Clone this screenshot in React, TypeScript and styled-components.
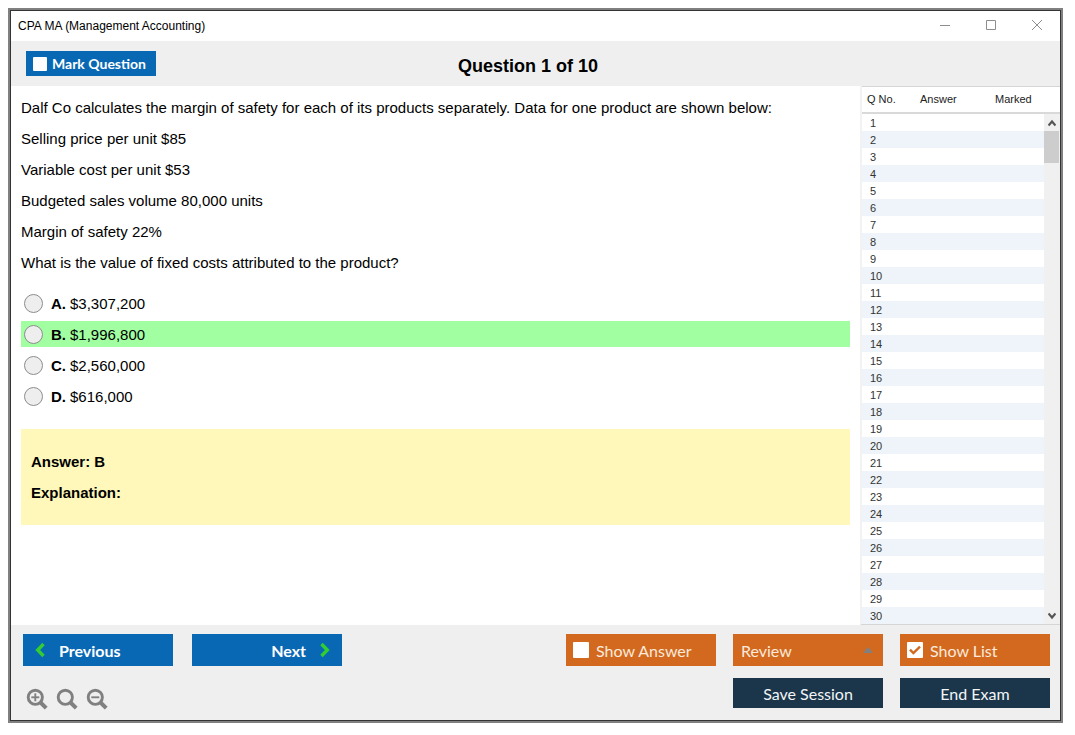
import React, { useState } from "react";
import styled, { createGlobalStyle } from "styled-components";

const GlobalStyle = createGlobalStyle`
  * { box-sizing: border-box; }
  body {
    margin: 0;
    background: #fff;
    color: #000;
    font-family: "Liberation Sans", Arial, sans-serif;
    font-size: 15px;
  }
  button { font: inherit; cursor: pointer; }
`;

const Page = styled.div`
  height: 100vh;
  min-height: 480px;
  padding: 8px 12px 12px 8px;
`;

const Frame = styled.div`
  height: 100%;
  border: 2px solid #808080;
`;

const Window = styled.div`
  height: 100%;
  display: flex;
  flex-direction: column;
  border: 1px solid #333436;
  background: #fff;
`;

const TitleBar = styled.header`
  flex: none;
  display: flex;
  align-items: center;
  justify-content: space-between;
  height: 30px;
  padding-left: 7px;
  font-size: 12px;
`;

const WindowControls = styled.div`
  display: flex;
`;

const WindowButton = styled.button`
  display: grid;
  place-items: center;
  width: 46px;
  height: 28px;
  padding: 0;
  border: 0;
  background: transparent;
  color: #8e8e8e;
`;

const Toolbar = styled.div`
  flex: none;
  display: grid;
  grid-template-columns: 1fr auto 1fr;
  align-items: center;
  height: 45px;
  padding: 0 30px 0 15px;
  background: #efefef;
`;

const Heading = styled.h1`
  margin: 0;
  padding-top: 4px;
  font-size: 18px;
  line-height: 20px;
`;

const CheckButton = styled.label<{ $tone: "blue" | "orange"; $small?: boolean }>`
  display: flex;
  align-items: center;
  justify-self: start;
  gap: ${(p) => (p.$small ? 5 : 7)}px;
  width: ${(p) => (p.$small ? 130 : 150)}px;
  height: ${(p) => (p.$small ? 25 : 32)}px;
  padding-left: 7px;
  background: ${(p) => (p.$tone === "blue" ? "#0968b4" : "#d2691e")};
  color: ${(p) => (p.$tone === "blue" ? "#fff" : "#fbe9dc")};
  font-family: Lato, sans-serif;
  font-size: ${(p) => (p.$small ? 14 : 16)}px;
  font-weight: ${(p) => (p.$small ? 700 : 400)};
  white-space: nowrap;
  cursor: pointer;
`;

const CheckFrame = styled.span<{ $small?: boolean }>`
  display: grid;
  width: ${(p) => (p.$small ? 14 : 16)}px;
  height: ${(p) => (p.$small ? 14 : 16)}px;
  color: #d2691e;
  > * { grid-area: 1 / 1; }
`;

const CheckInput = styled.input`
  appearance: none;
  width: 100%;
  height: 100%;
  margin: 0;
  border-radius: 1px;
  background: #fff;
`;

const Tick = styled.svg`
  width: 100%;
  height: 100%;
  z-index: 1;
  pointer-events: none;
`;

const Body = styled.div`
  flex: 1;
  min-height: 0;
  display: flex;
`;

const Question = styled.main`
  flex: 1;
  min-width: 0;
  overflow: hidden;
  padding: 13px 10px 0;
`;

const Paragraph = styled.p`
  margin: 0 0 14px;
  line-height: 17px;
`;

const Options = styled.fieldset`
  display: flex;
  flex-direction: column;
  gap: 5px;
  margin: 19px 0 20px;
  padding: 0;
  border: 0;
`;

const Option = styled.label<{ $correct: boolean }>`
  display: flex;
  align-items: center;
  height: 26px;
  padding-left: 3px;
  background: ${(p) => (p.$correct ? "#a1ffa1" : "transparent")};
`;

const OptionRadio = styled.input`
  appearance: none;
  width: 19px;
  height: 19px;
  margin: 0 8px 0 0;
  border: 1px solid #8c8c8c;
  border-radius: 50%;
  background: #eee;
  &:checked { background: radial-gradient(#444 0 5px, #eee 6px); }
`;

const OptionLetter = styled.b`
  margin-right: 4px;
`;

const AnswerBox = styled.section`
  display: flex;
  flex-direction: column;
  gap: 14px;
  padding: 24px 10px;
  background: #fff8ba;
  font-weight: 700;
  line-height: 17px;
`;

const ListPanel = styled.aside`
  flex: none;
  display: flex;
  flex-direction: column;
  width: 200px;
  border-left: 2px solid #f2f2f2;
  border-bottom: 1px solid #d5d5d5;
  font-size: 11px;
`;

const ListArea = styled.div`
  flex: 1;
  min-height: 0;
  display: grid;
  grid-template-columns: 1fr;
  grid-template-rows: minmax(0, 1fr);
  border-top: 1px solid #d5d5d5;
`;

const ListScroll = styled.div`
  grid-area: 1 / 1;
  min-height: 0;
  overflow: hidden;
`;

const ListTable = styled.table`
  width: 100%;
  border-collapse: separate;
  border-spacing: 0;
  table-layout: fixed;
  color: #333;
`;

const HeadCell = styled.th<{ $width?: number }>`
  width: ${(p) => (p.$width ? `${p.$width}px` : "auto")};
  height: 27px;
  padding: 0 0 2px 5px;
  border-bottom: 2px solid #d9d9d9;
  font-weight: 400;
  text-align: left;
  color: #222;
`;

const ListRow = styled.tr`
  &:nth-child(even) { background: #eef4f9; }
`;

const ListCell = styled.td`
  height: 17px;
  padding: 2px 0 0 8px;
  line-height: 15px;
`;

const ScrollTrack = styled.div`
  grid-area: 1 / 1;
  justify-self: end;
  display: flex;
  flex-direction: column;
  z-index: 1;
  width: 16px;
  margin-top: 27px;
  background: #f0f0f0;
`;

const ScrollButton = styled.button`
  display: grid;
  place-items: center;
  height: 17px;
  padding: 0;
  border: 0;
  background: transparent;
  color: #555;
`;

const ScrollThumb = styled.div`
  height: 32px;
  margin: 0 1px 0 0;
  background: #cdcdcd;
`;

const ScrollSpace = styled.div`
  flex: 1;
`;

const Footer = styled.footer`
  flex: none;
  display: flex;
  flex-direction: column;
  gap: 12px;
  padding: 9px 10px 10px 12px;
  background: #efefef;
`;

const FooterRow = styled.div`
  display: flex;
  justify-content: space-between;
`;

const ButtonGroup = styled.div<{ $gap: number }>`
  display: flex;
  gap: ${(p) => p.$gap}px;
`;

const NavButton = styled.button<{ $end?: boolean }>`
  display: flex;
  align-items: center;
  justify-content: ${(p) => (p.$end ? "flex-end" : "flex-start")};
  gap: 14px;
  width: 150px;
  height: 32px;
  padding: 0 12px;
  border: 0;
  background: #0968b4;
  color: #fff;
  font-family: Lato, sans-serif;
  font-size: 16px;
  font-weight: 700;
`;

const ReviewButton = styled.button`
  display: flex;
  align-items: center;
  justify-content: space-between;
  width: 150px;
  height: 32px;
  padding: 0 10px 0 8px;
  border: 0;
  background: #d2691e;
  color: #fbe9dc;
  font-family: Lato, sans-serif;
  font-size: 16px;
`;

const DarkButton = styled.button`
  width: 150px;
  height: 30px;
  padding: 0;
  border: 0;
  background: #1b364b;
  color: #f2f5f7;
  font-family: Lato, sans-serif;
  font-size: 16px;
`;

const ZoomTools = styled.div`
  display: flex;
  gap: 8px;
  padding: 10px 0 0 3px;
`;

const ZoomButton = styled.button`
  display: block;
  width: 22px;
  height: 22px;
  padding: 0;
  border: 0;
  background: transparent;
  color: #808080;
`;

const statement = [
  "Dalf Co calculates the margin of safety for each of its products separately. Data for one product are shown below:",
  "Selling price per unit $85",
  "Variable cost per unit $53",
  "Budgeted sales volume 80,000 units",
  "Margin of safety 22%",
  "What is the value of fixed costs attributed to the product?",
];

const options = [
  { letter: "A", text: "$3,307,200" },
  { letter: "B", text: "$1,996,800" },
  { letter: "C", text: "$2,560,000" },
  { letter: "D", text: "$616,000" },
];

const questionNumbers = Array.from({ length: 30 }, (_, i) => i + 1);

function ToggleButton(props: {
  label: string;
  tone: "blue" | "orange";
  small?: boolean;
  initial?: boolean;
}) {
  const [on, setOn] = useState(!!props.initial);
  return (
    <CheckButton $tone={props.tone} $small={props.small}>
      <CheckFrame $small={props.small}>
        <CheckInput type="checkbox" checked={on} onChange={() => setOn(!on)} />
        {on && (
          <Tick viewBox="0 0 16 16" fill="none" stroke="currentColor" strokeWidth="2.4">
            <path d="M3 7.6 6.4 11 13 4.6" />
          </Tick>
        )}
      </CheckFrame>
      {props.label}
    </CheckButton>
  );
}

function Chevron({ next }: { next?: boolean }) {
  return (
    <svg width="10" height="16" viewBox="0 0 10 16" fill="none" stroke="#32cd32" strokeWidth="3.4">
      <path d={next ? "M1.5 2 7.3 8 1.5 14" : "M8.5 2 2.7 8 8.5 14"} />
    </svg>
  );
}

function Magnifier({ sign }: { sign?: "plus" | "minus" }) {
  return (
    <svg width="22" height="22" viewBox="0 0 22 22" fill="none" stroke="currentColor">
      <circle cx="9.3" cy="9.3" r="7.1" strokeWidth="2.9" />
      <path d="M14 14 20.2 20.2" strokeWidth="4" />
      {sign && <path d="M5.3 9.3H13.3" strokeWidth="1.9" />}
      {sign === "plus" && <path d="M9.3 5.3V13.3" strokeWidth="1.9" />}
    </svg>
  );
}

export default function App() {
  const [chosen, setChosen] = useState("");
  return (
    <Page>
      <GlobalStyle />
      <Frame>
        <Window>
          <TitleBar>
            <span>CPA MA (Management Accounting)</span>
            <WindowControls>
              <WindowButton aria-label="Minimize">
                <svg width="12" height="12" fill="none" stroke="currentColor">
                  <path d="M1 5.5H11" />
                </svg>
              </WindowButton>
              <WindowButton aria-label="Maximize">
                <svg width="12" height="12" fill="none" stroke="currentColor">
                  <path d="M1.5 .5H10.5V9.5H1.5Z" />
                </svg>
              </WindowButton>
              <WindowButton aria-label="Close">
                <svg width="12" height="12" fill="none" stroke="currentColor">
                  <path d="M1 0 11 10M11 0 1 10" />
                </svg>
              </WindowButton>
            </WindowControls>
          </TitleBar>

          <Toolbar>
            <ToggleButton label="Mark Question" tone="blue" small />
            <Heading>Question 1 of 10</Heading>
          </Toolbar>

          <Body>
            <Question>
              {statement.map((line) => (
                <Paragraph key={line}>{line}</Paragraph>
              ))}
              <Options aria-label="Answer options">
                {options.map((o) => (
                  <Option key={o.letter} $correct={o.letter === "B"}>
                    <OptionRadio
                      type="radio"
                      name="option"
                      checked={chosen === o.letter}
                      onChange={() => setChosen(o.letter)}
                    />
                    <OptionLetter>{o.letter}.</OptionLetter>
                    {o.text}
                  </Option>
                ))}
              </Options>
              <AnswerBox>
                <div>Answer: B</div>
                <div>Explanation:</div>
              </AnswerBox>
            </Question>

            <ListPanel>
              <ListArea>
                <ListScroll>
                  <ListTable>
                    <thead>
                      <tr>
                        <HeadCell $width={53}>Q No.</HeadCell>
                        <HeadCell $width={75}>Answer</HeadCell>
                        <HeadCell>Marked</HeadCell>
                      </tr>
                    </thead>
                    <tbody>
                      {questionNumbers.map((n) => (
                        <ListRow key={n}>
                          <ListCell>{n}</ListCell>
                          <ListCell />
                          <ListCell />
                        </ListRow>
                      ))}
                    </tbody>
                  </ListTable>
                </ListScroll>
                <ScrollTrack>
                  <ScrollButton aria-label="Scroll up">
                    <svg width="8" height="8" fill="none" stroke="currentColor" strokeWidth="2.2">
                      <path d="M.5 6.5 4 2.5 7.5 6.5" />
                    </svg>
                  </ScrollButton>
                  <ScrollThumb />
                  <ScrollSpace />
                  <ScrollButton aria-label="Scroll down">
                    <svg width="8" height="8" fill="none" stroke="currentColor" strokeWidth="2.2">
                      <path d="M.5 1.5 4 5.5 7.5 1.5" />
                    </svg>
                  </ScrollButton>
                </ScrollTrack>
              </ListArea>
            </ListPanel>
          </Body>

          <Footer>
            <FooterRow>
              <ButtonGroup $gap={19}>
                <NavButton>
                  <Chevron />
                  Previous
                </NavButton>
                <NavButton $end>
                  Next
                  <Chevron next />
                </NavButton>
              </ButtonGroup>
              <ButtonGroup $gap={17}>
                <ToggleButton label="Show Answer" tone="orange" />
                <ReviewButton aria-haspopup="menu">
                  Review
                  <svg width="10" height="6" fill="#808080">
                    <path d="M0 6 5 0 10 6Z" />
                  </svg>
                </ReviewButton>
                <ToggleButton label="Show List" tone="orange" initial />
              </ButtonGroup>
            </FooterRow>
            <FooterRow>
              <ZoomTools>
                <ZoomButton aria-label="Zoom in">
                  <Magnifier sign="plus" />
                </ZoomButton>
                <ZoomButton aria-label="Reset zoom">
                  <Magnifier />
                </ZoomButton>
                <ZoomButton aria-label="Zoom out">
                  <Magnifier sign="minus" />
                </ZoomButton>
              </ZoomTools>
              <ButtonGroup $gap={17}>
                <DarkButton>Save Session</DarkButton>
                <DarkButton>End Exam</DarkButton>
              </ButtonGroup>
            </FooterRow>
          </Footer>
        </Window>
      </Frame>
    </Page>
  );
}
